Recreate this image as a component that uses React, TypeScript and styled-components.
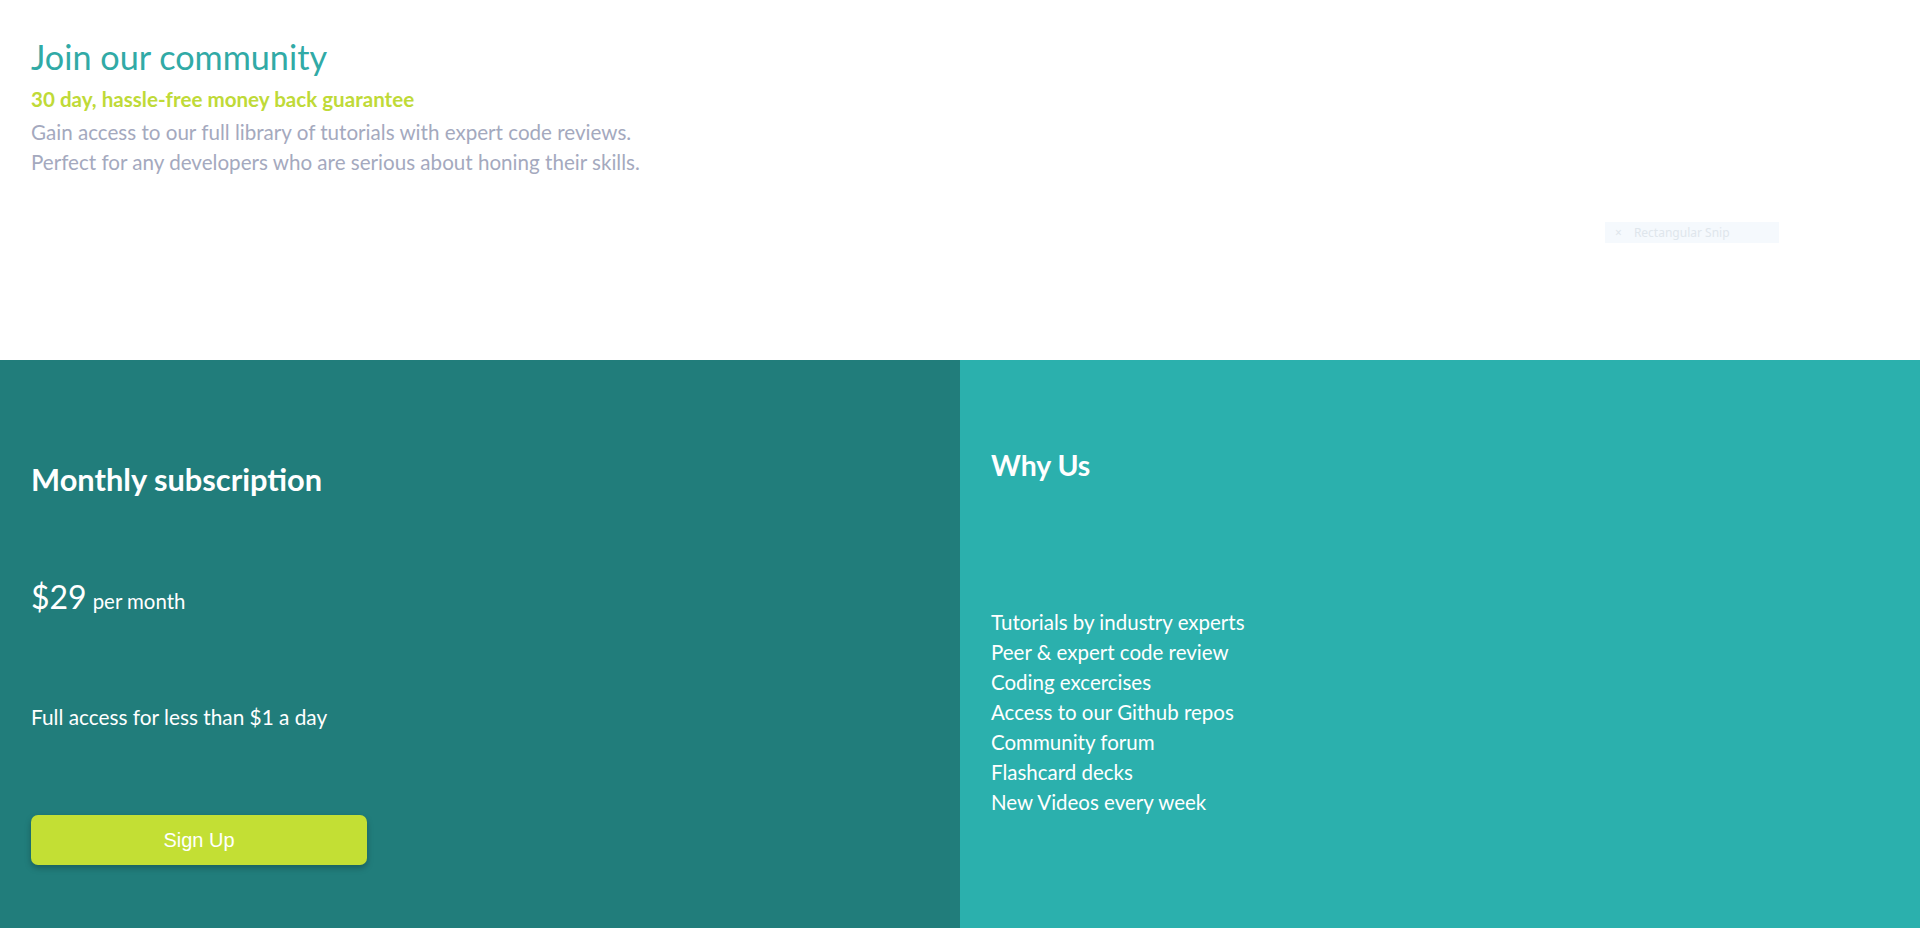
import React from "react";
import styled, { createGlobalStyle } from "styled-components";

const GlobalStyle = createGlobalStyle`
  html, body { margin: 0; padding: 0; background: #ffffff; }
  body { font-family: "Lato", "Open Sans", sans-serif; -webkit-font-smoothing: antialiased; }
  * { box-sizing: border-box; }
`;

const Page = styled.main`
  width: 1920px;
  min-height: 928px;
  display: flex;
  flex-direction: column;
`;

const Intro = styled.section`
  position: relative;
  height: 360px;
  padding: 36px 31px 0;
  background: #ffffff;
`;

const Title = styled.h1`
  margin: 0;
  font-weight: 400;
  font-size: 34.2px;
  line-height: 42px;
  color: #31aaa6;
`;

const Guarantee = styled.p`
  margin: 9px 0 0;
  font-weight: 700;
  font-size: 20.6px;
  line-height: 24px;
  color: #bfda38;
`;

const Lead = styled.p`
  margin: 6px 0 0;
  font-size: 20.6px;
  line-height: 30px;
  color: #a4a9be;
`;

const Snip = styled.div`
  position: absolute;
  left: 1605px;
  top: 222px;
  width: 174px;
  height: 21px;
  display: flex;
  align-items: center;
  gap: 12px;
  padding-left: 10px;
  background: #f5f9fd;
  font-family: "Noto Sans", sans-serif;
  font-size: 12px;
  color: #dfe6ec;
`;

const Panels = styled.section`
  display: grid;
  grid-template-columns: 1fr 1fr;
  height: 568px;
`;

const Panel = styled.div<{ $tone: "dark" | "light"; $top: number }>`
  background: ${(p) => (p.$tone === "dark" ? "#217d7b" : "#2bb0ad")};
  padding: ${(p) => p.$top}px 31px 0;
  color: #ffffff;
  display: flex;
  flex-direction: column;
  align-items: flex-start;
`;

const PanelTitle = styled.h2<{ $size: number }>`
  margin: 0;
  font-weight: 700;
  font-size: ${(p) => p.$size}px;
  line-height: 36px;
`;

const Price = styled.div`
  margin-top: 81px;
  display: flex;
  align-items: baseline;
  gap: 6px;
  line-height: 36px;
`;

const Amount = styled.span`
  font-size: 32px;
`;

const Period = styled.span`
  font-size: 20.4px;
`;

const Note = styled.p`
  margin: 83px 0 0;
  font-size: 20.8px;
  line-height: 30px;
`;

const SignUp = styled.button`
  margin-top: 83px;
  width: 336px;
  height: 50px;
  border: none;
  border-radius: 7px;
  background: #c3df34;
  color: #ffffff;
  font-family: "Liberation Sans", Arial, sans-serif;
  font-size: 20px;
  box-shadow: 0 3px 6px rgba(0, 0, 0, 0.25);
  cursor: pointer;
`;

const Features = styled.ul`
  margin: 124px 0 0;
  padding: 0;
  list-style: none;
  font-size: 20.5px;
  line-height: 30px;
`;

const features = [
  "Tutorials by industry experts",
  "Peer & expert code review",
  "Coding excercises",
  "Access to our Github repos",
  "Community forum",
  "Flashcard decks",
  "New Videos every week",
];

export default function App() {
  return (
    <>
      <GlobalStyle />
      <Page>
        <Intro>
          <Title>Join our community</Title>
          <Guarantee>30 day, hassle-free money back guarantee</Guarantee>
          <Lead>
            Gain access to our full library of tutorials with expert code reviews.
            <br />
            Perfect for any developers who are serious about honing their skills.
          </Lead>
          <Snip>
            <span>×</span>
            <span>Rectangular Snip</span>
          </Snip>
        </Intro>
        <Panels>
          <Panel $tone="dark" $top={102}>
            <PanelTitle $size={30.8}>Monthly subscription</PanelTitle>
            <Price>
              <Amount>$29</Amount>
              <Period>per month</Period>
            </Price>
            <Note>Full access for less than $1 a day</Note>
            <SignUp>Sign Up</SignUp>
          </Panel>
          <Panel $tone="light" $top={87}>
            <PanelTitle $size={28.4}>Why Us</PanelTitle>
            <Features>
              {features.map((f) => (
                <li key={f}>{f}</li>
              ))}
            </Features>
          </Panel>
        </Panels>
      </Page>
    </>
  );
}
